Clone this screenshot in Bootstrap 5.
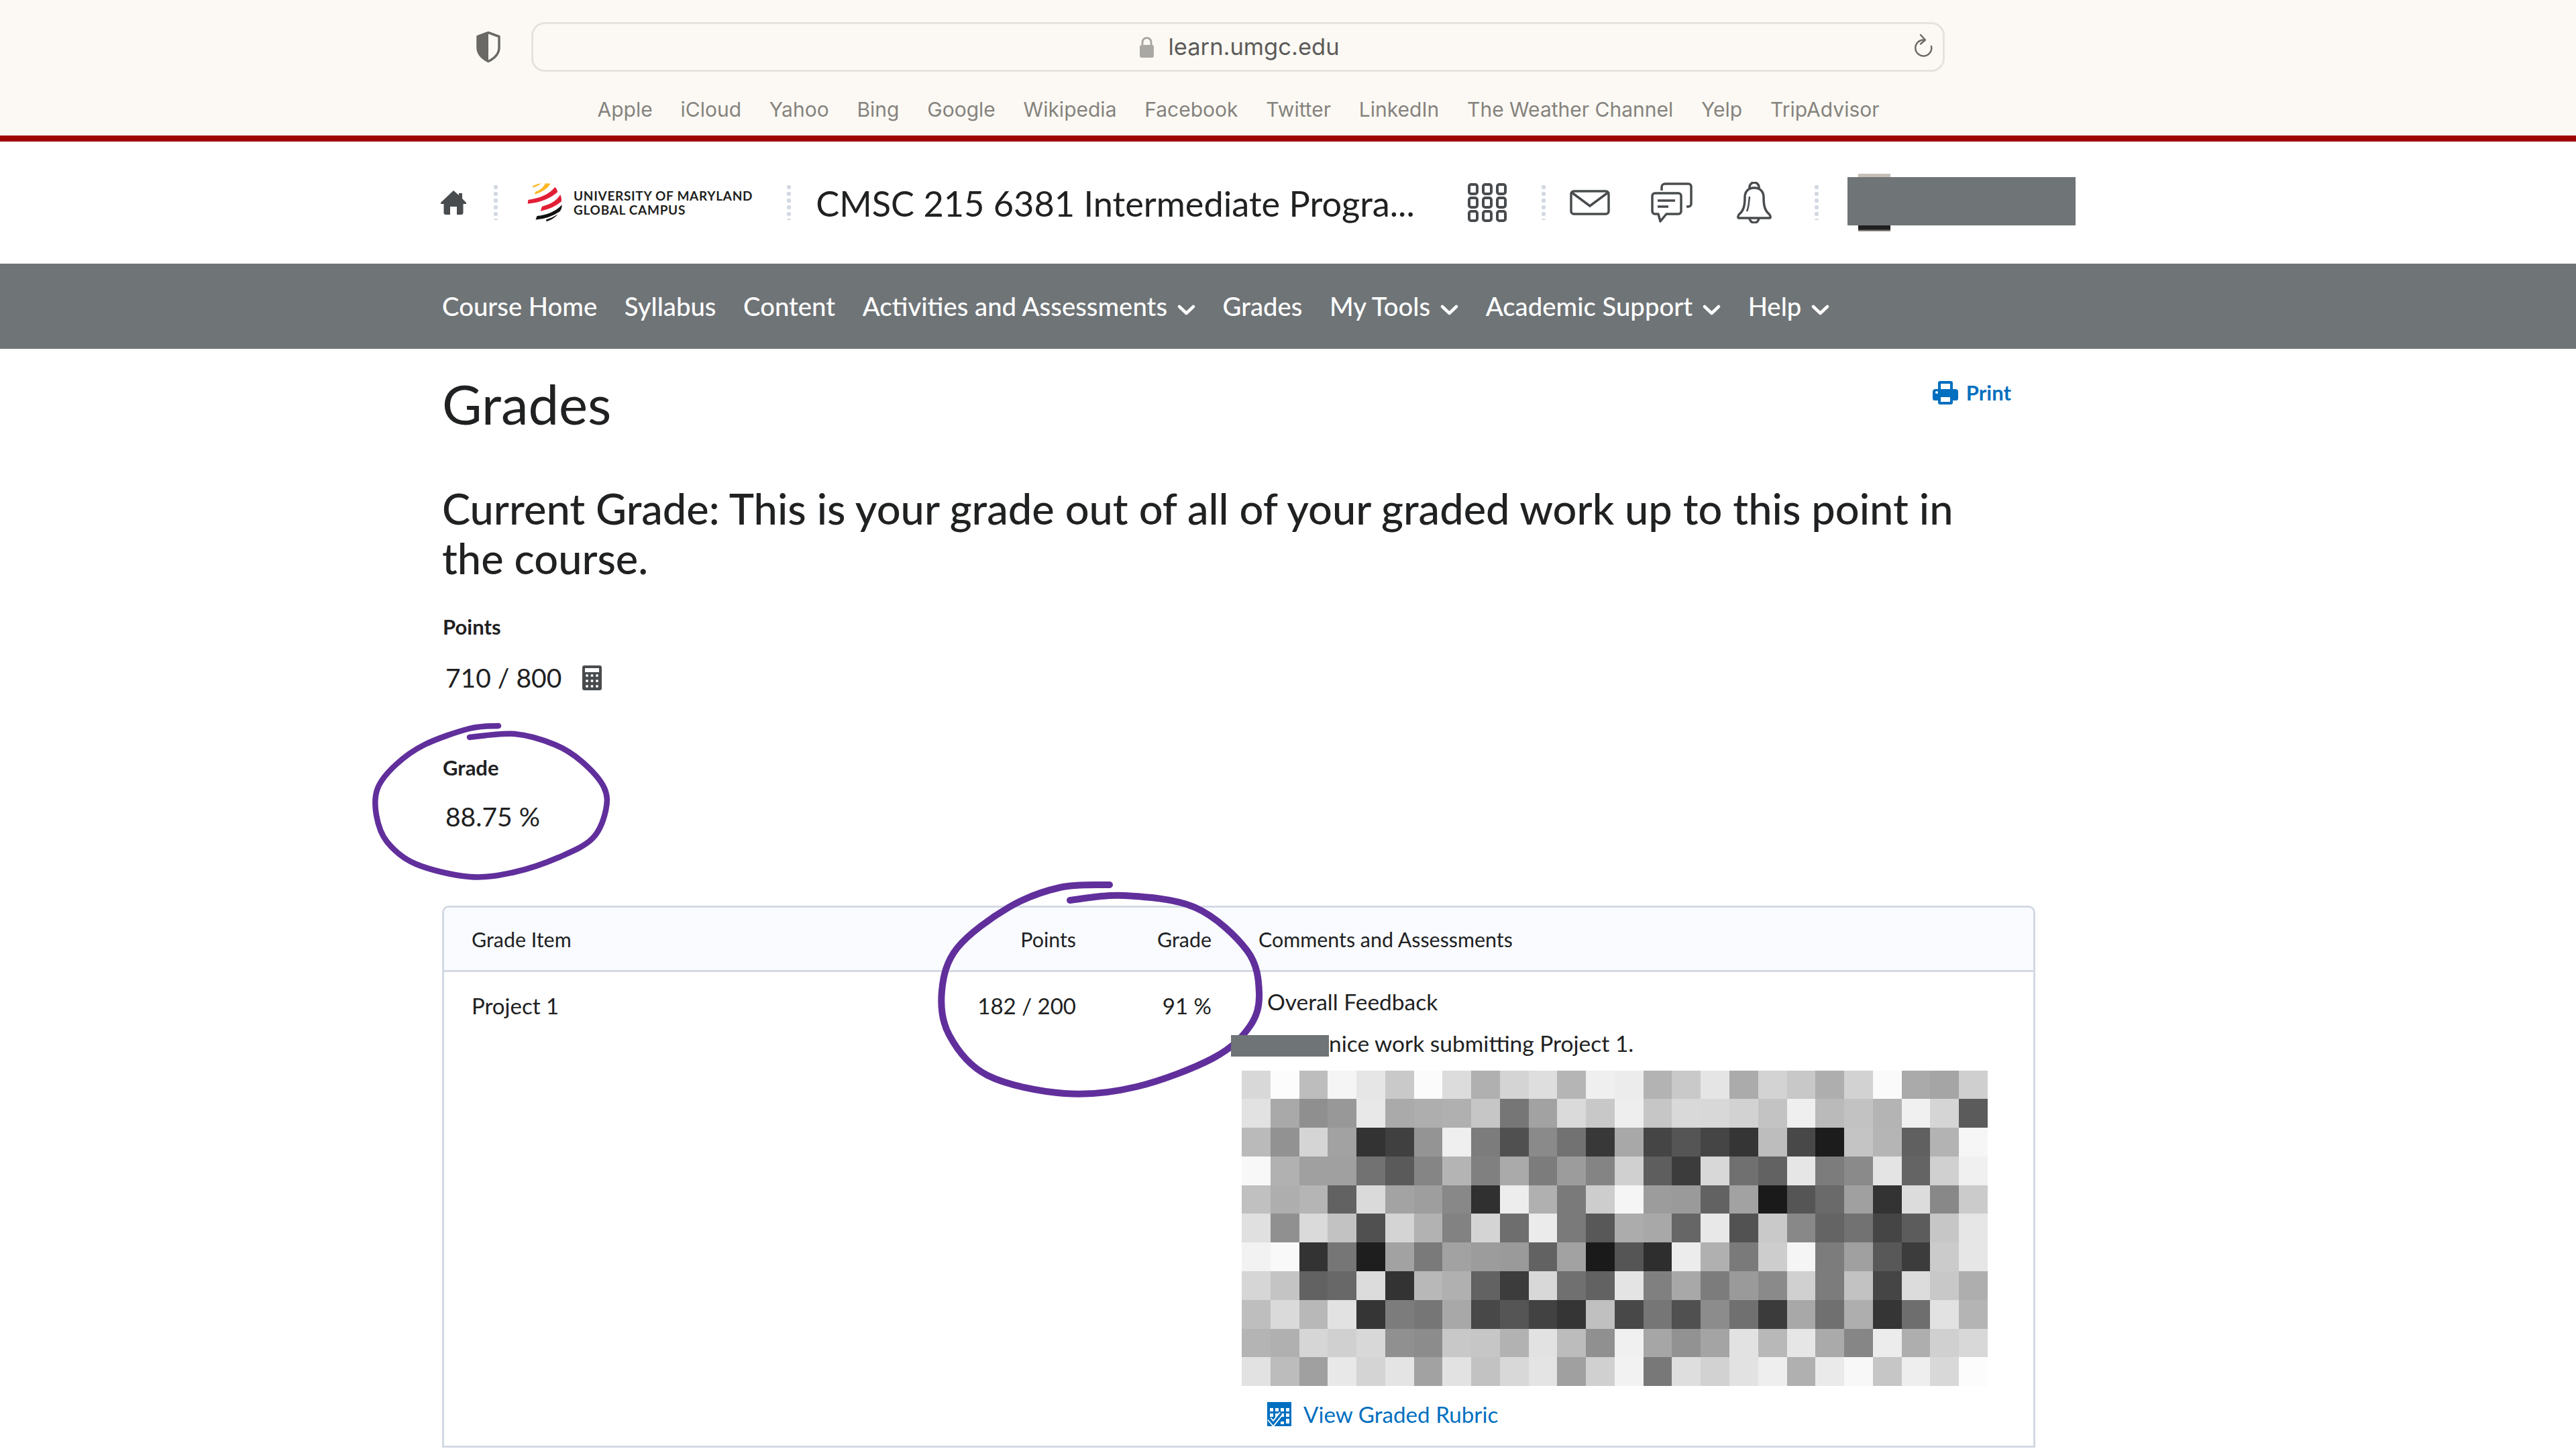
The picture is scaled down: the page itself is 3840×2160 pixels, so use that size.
<!DOCTYPE html>
<html lang="en">
<head>
<meta charset="utf-8">
<title>Grades</title>
<link href="https://cdn.jsdelivr.net/npm/bootstrap@5.3.0/dist/css/bootstrap.min.css" rel="stylesheet">
<style>
html,body{width:3840px;height:2160px;overflow:hidden;background:#fff}
body{font-family:Lato,"Liberation Sans",sans-serif;color:#202122}
.brow-top{height:202px;background:#fcf9f4;font-family:Inter,"Liberation Sans",sans-serif}
.addr-row{height:141px;padding-left:709px;padding-top:33px}
.addr-row>svg{margin-right:45px;margin-top:14px}
.addr-bar{width:2107px;height:74px;border:3px solid #e6e3df;border-radius:20px;color:#5c5b59;font-size:34.500px;line-height:1;padding-left:4px}
.addr-bar .lk{margin-right:20px}
.addr-bar .rl{right:14px;top:14px}
.bm-row{gap:41.800px;font-size:30px;line-height:44px;color:#85837e;padding-right:148px}
.red-rule{height:9px;background:#a00505}
.hdr-top{height:182px;padding-left:657px}
.dot-sep{width:6px;height:52px;background:radial-gradient(circle at 3px 3px,#d3d9e3 3px,transparent 3.4px) 0 0/6px 10px repeat-y}
.logo-words{font-size:19px;line-height:21px;font-weight:700;letter-spacing:.7px;color:#1e1f20;white-space:nowrap}
.crs-title{font-size:52.300px;line-height:1.2;color:#202122;white-space:nowrap;width:950px;padding-top:2px}
.usr-slot{width:340px;height:86px}
.usr-photo{left:16px;top:0;width:48px;height:86px;background:linear-gradient(#c5bfb8 0 6%,#777 50%,#1f1f22 88%,#1f1f22 96%,#b9b2aa)}
.usr-mask{left:0;top:5px;width:340px;height:72px;background:#6f7477}
.crs-nav{height:127px;background:#6f7477;padding-left:659px;gap:40.500px}
.crs-nav a{color:#fff;font-size:38.300px;font-weight:500;text-decoration:none;white-space:nowrap;line-height:1;padding:0}
.crs-nav svg{margin-left:15px;vertical-align:middle}
.pg-main{padding-left:659px;width:3034px}
.ttl-row{padding-top:34px;height:201px}
.ttl-row h1{font-size:81.500px;line-height:96px;margin:0;font-weight:400;color:#202122}
.prt-link{color:#006fbf;font-size:31px;font-weight:700;line-height:40px;text-decoration:none;margin-top:11px;margin-right:36px}
.cur-grade{font-size:63.150px;line-height:73.5px;font-weight:500;margin:0 0 46px;max-width:2320px}
.stat-lbl{font-size:31px;line-height:40px;font-weight:700;padding-left:1px}
.stat-val{font-size:39px;line-height:50px;padding-left:5px;margin-top:31px}
.stat-val svg{margin-left:31px}
.stat-val.val-tight{margin-top:28px}
.stat-gap{height:89px}
.stat-end{height:108px}
.grd-wrap{border:3px solid #d3d9e3;border-radius:10px 10px 0 0;height:808px;overflow:hidden}
.table.grd-tbl{table-layout:fixed;width:100%;margin:0;color:#202122}
.table.grd-tbl>thead>tr>th{background:#f9fbff;font-size:30.400px;font-weight:400;height:94px;padding:4px 27px 0 41px;vertical-align:middle;border-bottom:3px solid #d3d9e3}
.table.grd-tbl>tbody>tr>td{font-size:33px;line-height:44px;padding:28px 27px 0 41px;vertical-align:top;border:0;height:706px}
.table.grd-tbl .c1{width:738px}.table.grd-tbl .c2{width:233px}.table.grd-tbl .c3{width:202px}
.table.grd-tbl>thead>tr>.cnum,.table.grd-tbl>tbody>tr>.cnum{text-align:right;padding-left:0;padding-right:29px}
.table.grd-tbl>tbody>tr>.ccom{padding:22px 0 0 0}
.fb-head{padding-left:54px;font-size:33.500px;line-height:44px}
.fb-line{font-size:33.500px;line-height:44px;margin-top:18px}
.redact{display:inline-block;width:146px;height:32px;background:#6f7477;vertical-align:middle;position:relative;z-index:3}
.pix-grid{display:grid;grid-template-columns:repeat(26,42.77px);grid-auto-rows:42.80px;margin:19px 0 0 16px;width:1112px}
.rub-link{color:#006fbf;font-size:33.200px;line-height:44px;text-decoration:none;margin:20px 0 0 54px}
.rub-link svg{margin-right:18px}
.ink-layer{left:0;top:0;z-index:2;pointer-events:none}
</style>
</head>
<body class="position-relative">
<div class="brow-top">
  <div class="addr-row d-flex align-items-start">
    <svg width="38" height="46" viewBox="0 0 38 46"><path d="M19 1.5 35 7.5V24c0 9-7 16-16 20.500C10 40 3 33 3 24V7.500Z" fill="none" stroke="#6b6965" stroke-width="3.500" stroke-linejoin="round"/><path d="M19 2 3 7.500V24c0 9 7 16 16 20Z" fill="#6b6965"/></svg>
    <div class="addr-bar position-relative d-flex align-items-center justify-content-center">
      <svg class="lk" width="23" height="33" viewBox="0 0 23 33"><path d="M5 14V9a6.500 6.500 0 0 1 13 0v5" fill="none" stroke="#aaa8a4" stroke-width="3"/><rect x="1" y="13" width="21" height="19" rx="3" fill="#aaa8a4"/></svg>
      <span>learn.umgc.edu</span>
      <svg class="rl position-absolute" width="30" height="37" viewBox="0 0 30 37"><path d="M16 9.500A12 12 0 1 0 27 19" fill="none" stroke="#6d6b68" stroke-width="2.500" stroke-linecap="round"/><path d="M11 2l7 7.500-7 6" fill="none" stroke="#6d6b68" stroke-width="2.500" stroke-linecap="round" stroke-linejoin="round"/></svg>
    </div>
  </div>
  <div class="bm-row d-flex justify-content-center">
    <span>Apple</span><span>iCloud</span><span>Yahoo</span><span>Bing</span><span>Google</span><span>Wikipedia</span><span>Facebook</span><span>Twitter</span><span>LinkedIn</span><span>The Weather Channel</span><span>Yelp</span><span>TripAdvisor</span>
  </div>
</div>
<div class="red-rule"></div>

<header class="hdr-top d-flex align-items-center">
  <svg width="38" height="38" viewBox="0 0 38 38"><path d="M19 1 27 8V5h5v8l6 6v2h-4.500v13a3 3 0 0 1-3 3H24V25h-10v12H7.500a3 3 0 0 1-3-3V21H0v-2Z" fill="#494c4e"/></svg>
  <div class="dot-sep" style="margin-left:41px"></div>
  <svg style="margin-left:43px" width="56" height="62" viewBox="440 95 170 185"><path d="M466 113Q485 103 505 100 497 110 470 119Z" fill="#fdb827"/><path d="M478 140Q515 125 525 100L548 102Q530 135 478 150Z" fill="#fdb827"/><path d="M447 175Q530 165 568 118 578 125 580 140 530 185 445 193Z" fill="#e21f36"/><path d="M510 205Q570 190 592 152 600 165 597 183 560 215 503 226Z" fill="#e21f36"/><path d="M487 248Q560 240 600 197 600 215 590 228 540 262 481 265Z" fill="#111"/><path d="M528 265Q555 258 582 240 560 265 530 273Z" fill="#111"/></svg>
  <div class="logo-words" style="margin-left:14px">UNIVERSITY OF MARYLAND<br>GLOBAL CAMPUS</div>
  <div class="dot-sep" style="margin-left:51px"></div>
  <div class="crs-title" style="margin-left:37px">CMSC 215 6381 Intermediate Progra...</div>
  <svg style="margin-left:22px" width="58" height="58" viewBox="0 0 58 58"><g fill="none" stroke="#494c4e" stroke-width="4"><rect x="2" y="2" width="12" height="14" rx="3"/><rect x="23" y="2" width="12" height="14" rx="3"/><rect x="44" y="2" width="12" height="14" rx="3"/><rect x="2" y="22" width="12" height="14" rx="3"/><rect x="23" y="22" width="12" height="14" rx="3"/><rect x="44" y="22" width="12" height="14" rx="3"/><rect x="2" y="42" width="12" height="14" rx="3"/><rect x="23" y="42" width="12" height="14" rx="3"/><rect x="44" y="42" width="12" height="14" rx="3"/></g></svg>
  <div class="dot-sep" style="margin-left:52px"></div>
  <svg style="margin-left:36px" width="60" height="38" viewBox="0 0 60 38"><rect x="2" y="2" width="56" height="34" rx="4" fill="none" stroke="#494c4e" stroke-width="3.500"/><path d="M3 4l27 20L57 4" fill="none" stroke="#494c4e" stroke-width="3.500"/></svg>
  <svg style="margin-left:61px" width="62" height="60" viewBox="0 0 62 60"><g fill="none" stroke="#494c4e" stroke-width="3.500" stroke-linejoin="round"><path d="M16 12V7a5 5 0 0 1 5-5h35a4 4 0 0 1 4 4v26a4 4 0 0 1-4 4h-3"/><path d="M6 16h35a4 4 0 0 1 4 4v23a4 4 0 0 1-4 4H23l-9 11-3-11H6a4 4 0 0 1-4-4V20a4 4 0 0 1 4-4Z"/><path d="M10 27h26M10 36h16"/></g></svg>
  <svg style="margin-left:65px" width="54" height="62" viewBox="0 0 54 62"><g fill="none" stroke="#494c4e" stroke-width="3.500" stroke-linejoin="round"><path d="M20 11V8a7 7 0 0 1 14 0v3"/><path d="M27 9c-10 0-14 7-14 14 0 13-2 20-8 25-3 3-3 6 0 6h44c3 0 3-3 0-6-6-5-8-12-8-25 0-7-4-14-14-14Z"/><path d="M20 54a7 7 0 0 0 14 0"/><path d="M20 22c-1 8-1 16-4 22" stroke-width="2.500"/></g></svg>
  <div class="dot-sep" style="margin-left:63px"></div>
  <div class="usr-slot position-relative" style="margin-left:43px">
    <div class="usr-photo position-absolute"></div>
    <div class="usr-mask position-absolute"></div>
  </div>
</header>

<nav class="crs-nav d-flex align-items-center">
  <a href="#">Course Home</a>
  <a href="#">Syllabus</a>
  <a href="#">Content</a>
  <a href="#">Activities and Assessments<svg width="27" height="16" viewBox="0 0 27 16"><path d="M3 3l10.500 10L24 3" fill="none" stroke="#fff" stroke-width="4.500" stroke-linecap="round" stroke-linejoin="round"/></svg></a>
  <a href="#">Grades</a>
  <a href="#">My Tools<svg width="27" height="16" viewBox="0 0 27 16"><path d="M3 3l10.500 10L24 3" fill="none" stroke="#fff" stroke-width="4.500" stroke-linecap="round" stroke-linejoin="round"/></svg></a>
  <a href="#">Academic Support<svg width="27" height="16" viewBox="0 0 27 16"><path d="M3 3l10.500 10L24 3" fill="none" stroke="#fff" stroke-width="4.500" stroke-linecap="round" stroke-linejoin="round"/></svg></a>
  <a href="#">Help<svg width="27" height="16" viewBox="0 0 27 16"><path d="M3 3l10.500 10L24 3" fill="none" stroke="#fff" stroke-width="4.500" stroke-linecap="round" stroke-linejoin="round"/></svg></a>
</nav>

<main class="pg-main">
  <div class="ttl-row d-flex justify-content-between align-items-start">
    <h1>Grades</h1>
    <a class="prt-link d-flex align-items-center" href="#">
      <svg width="38" height="36" viewBox="0 0 38 36" style="margin-right:12px"><path d="M8 13V4a3 3 0 0 1 3-3h16a3 3 0 0 1 3 3v9h4a4 4 0 0 1 4 4v10a3 3 0 0 1-3 3h-5v3a3 3 0 0 1-3 3H11a3 3 0 0 1-3-3v-3H3a3 3 0 0 1-3-3V17a4 4 0 0 1 4-4Zm4 0h14V5H12Zm0 12v7h14v-7Z" fill="#006fbf" fill-rule="evenodd"/><circle cx="6" cy="18" r="2" fill="#fff"/></svg>
      Print
    </a>
  </div>
  <h2 class="cur-grade">Current Grade: This is your grade out of all of your graded work up to this point in the course.</h2>
  <div class="stat-lbl">Points</div>
  <div class="stat-val d-flex align-items-center">710 / 800
    <svg width="29" height="37" viewBox="0 0 29 37"><path d="M3 0h23a3 3 0 0 1 3 3v31a3 3 0 0 1-3 3H3a3 3 0 0 1-3-3V3a3 3 0 0 1 3-3Zm1 4v6h21V4Z" fill="#494c4e" fill-rule="evenodd"/><g fill="#fff"><circle cx="7" cy="15" r="2"/><circle cx="14.500" cy="15" r="2"/><circle cx="22" cy="15" r="2"/><circle cx="7" cy="23" r="2"/><circle cx="14.500" cy="23" r="2"/><circle cx="22" cy="23" r="2"/><circle cx="7" cy="31" r="2"/><circle cx="14.500" cy="31" r="2"/><circle cx="22" cy="31" r="2"/></g></svg>
  </div>
  <div class="stat-gap"></div>
  <div class="stat-lbl">Grade</div>
  <div class="stat-val val-tight">88.75 %</div>
  <div class="stat-end"></div>

  <div class="grd-wrap">
    <table class="table grd-tbl">
      <thead><tr>
        <th class="c1">Grade Item</th>
        <th class="c2 cnum">Points</th>
        <th class="c3 cnum">Grade</th>
        <th>Comments and Assessments</th>
      </tr></thead>
      <tbody><tr>
        <td>Project 1</td>
        <td class="cnum">182 / 200</td>
        <td class="cnum">91 %</td>
        <td class="ccom">
          <div class="fb-head">Overall Feedback</div>
          <div class="fb-line"><span class="redact"></span>nice work submitting Project 1.</div>
          <div class="pix-grid" id="pixGrid"></div>
          <a class="rub-link d-inline-flex align-items-center" href="#">
            <svg width="36" height="36" viewBox="0 0 36 36"><path d="M0 0h36v36H0Z" fill="#006fbf"/><g fill="#fff"><rect x="4" y="9" width="5" height="5"/><rect x="12" y="9" width="5" height="5"/><rect x="20" y="9" width="5" height="5"/><rect x="28" y="9" width="5" height="5"/><rect x="4" y="17" width="5" height="5"/><rect x="12" y="17" width="5" height="5"/><rect x="20" y="17" width="5" height="5"/><rect x="28" y="17" width="5" height="5"/><rect x="28" y="25" width="5" height="7"/><rect x="20" y="29" width="5" height="4"/></g><path d="M3 25l6 7 12-15" fill="none" stroke="#fff" stroke-width="7"/><path d="M3 25l6 7 12-15" fill="none" stroke="#006fbf" stroke-width="3.500"/></svg>
            View Graded Rubric
          </a>
        </td>
      </tr></tbody>
    </table>
  </div>
</main>

<svg class="ink-layer position-absolute" width="3840" height="2160" viewBox="0 0 3840 2160" aria-hidden="true">
  <path id="inkA" fill="none" stroke="#612f9c" stroke-width="8.500" stroke-linecap="round"/>
  <path id="inkB" fill="none" stroke="#612f9c" stroke-width="10" stroke-linecap="round"/>
</svg>

<script>
var rows=[
"d8 fc bd f5 e6 c9 fb dc b0 d4 de b5 ef ec b3 c9 e5 ab d3 c8 ae d2 fa aa a5 cf",
"e2 a9 8f 98 e8 aa ae b0 c6 76 a2 da c8 ee c6 d9 d8 d2 c3 ef ba c2 b4 f0 d5 5b",
"ba 92 d5 a2 33 40 94 ef 7c 50 8a 72 38 a8 45 55 45 35 bd 48 1c c4 b5 60 b3 f6",
"f8 b1 a0 a0 72 5a 85 b4 80 aa 7c 9c 84 d0 5e 3c d8 70 62 e6 7c 8a e4 64 d0 f0",
"c0 ae b5 62 da a3 9e 88 30 ed b0 7a cd f5 9c 9a 62 a2 1a 55 6a a0 33 dc 88 cb",
"e0 90 da c2 50 d4 b2 82 d4 6e eb 7a 58 ac a8 66 e8 52 c9 88 64 72 45 5c c6 e6",
"f2 f9 33 76 1e a2 7a a2 9c 9a 62 a2 1a 55 2e ec b0 7a cd f5 7c a0 58 3c cb e6",
"d6 c4 62 68 dc 33 b8 b0 62 3c d8 70 62 e4 80 a8 7c 9a 8a d0 7c c2 45 dc c8 ae",
"be da b8 e2 35 7c 76 a8 48 55 42 35 c0 48 76 50 8c 70 3b a8 70 ae 35 6e e2 b4",
"b4 b0 d6 d0 d8 90 8c c8 c6 b2 e2 bc 90 f0 a6 92 a4 e2 b8 e6 aa 86 ec ae d0 d8",
"e2 bc a0 e8 d4 e4 a2 e2 c2 d8 e4 a0 d0 f2 78 de d2 e2 ee b0 ea f8 c6 ee d8 fc"];
var g=document.getElementById('pixGrid');
rows.forEach(function(r){r.split(' ').forEach(function(v){var d=document.createElement('div');d.style.background='#'+v+v+v;g.appendChild(d);});});
function smooth(p){var s='M'+p[0][0]+' '+p[0][1];for(var i=0;i<p.length-1;i++){var a=p[i-1]||p[i],b=p[i],c=p[i+1],d=p[i+2]||c;s+='C'+(b[0]+(c[0]-a[0])/6)+' '+(b[1]+(c[1]-a[1])/6)+' '+(c[0]-(d[0]-b[0])/6)+' '+(c[1]-(d[1]-b[1])/6)+' '+c[0]+' '+c[1];}return s;}
document.getElementById('inkA').setAttribute('d',smooth([[743,1082],[700,1086],[633,1110],[590,1140],[563,1175],[561,1215],[577,1255],[620,1288],[700,1307],[767,1300],[833,1278],[883,1250],[903,1208],[900,1173],[867,1135],[827,1110],[767,1094],[700,1099]]));
document.getElementById('inkB').setAttribute('d',smooth([[1654,1319],[1580,1323],[1503,1353],[1427,1413],[1404,1477],[1415,1543],[1472,1603],[1587,1630],[1694,1620],[1809,1577],[1863,1530],[1877,1480],[1859,1417],[1782,1353],[1675,1335],[1595,1342]]));
</script>
<script src="https://cdn.jsdelivr.net/npm/bootstrap@5.3.0/dist/js/bootstrap.bundle.min.js"></script>
</body>
</html>
